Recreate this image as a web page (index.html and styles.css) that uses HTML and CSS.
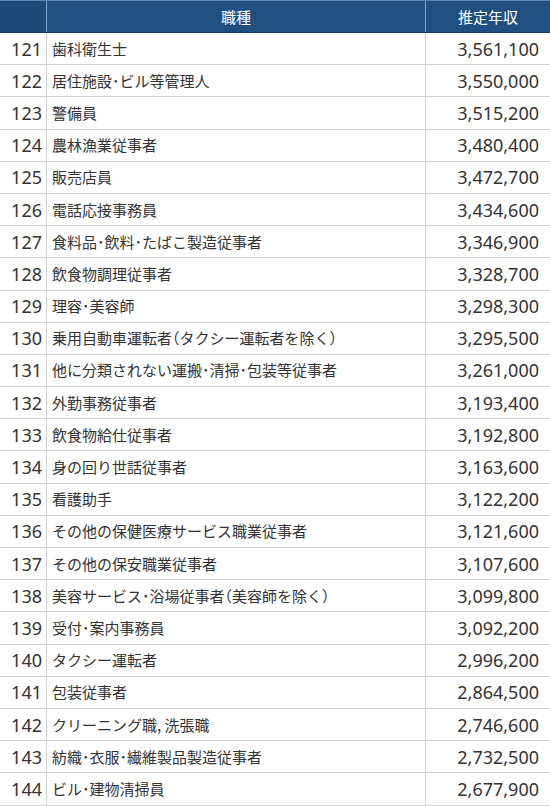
FILE: index.html
```html
<!DOCTYPE html>
<html lang="ja">
<head>
<meta charset="utf-8">
<link rel="stylesheet" href="styles.css">
</head>
<body>
<table class="rank">
<thead>
<tr><th class="c-no"></th><th class="c-job">職種</th><th class="c-pay">推定年収</th></tr>
</thead>
<tbody>
<tr><td class="c-no">121</td><td class="c-job">歯科衛生士</td><td class="c-pay">3,561,100</td></tr>
<tr><td class="c-no">122</td><td class="c-job">居住施設･ビル等管理人</td><td class="c-pay">3,550,000</td></tr>
<tr><td class="c-no">123</td><td class="c-job">警備員</td><td class="c-pay">3,515,200</td></tr>
<tr><td class="c-no">124</td><td class="c-job">農林漁業従事者</td><td class="c-pay">3,480,400</td></tr>
<tr><td class="c-no">125</td><td class="c-job">販売店員</td><td class="c-pay">3,472,700</td></tr>
<tr><td class="c-no">126</td><td class="c-job">電話応接事務員</td><td class="c-pay">3,434,600</td></tr>
<tr><td class="c-no">127</td><td class="c-job">食料品･飲料･たばこ製造従事者</td><td class="c-pay">3,346,900</td></tr>
<tr><td class="c-no">128</td><td class="c-job">飲食物調理従事者</td><td class="c-pay">3,328,700</td></tr>
<tr><td class="c-no">129</td><td class="c-job">理容･美容師</td><td class="c-pay">3,298,300</td></tr>
<tr><td class="c-no">130</td><td class="c-job">乗用自動車運転者<span class="paren">（</span>タクシー運転者を除く<span class="paren">）</span></td><td class="c-pay">3,295,500</td></tr>
<tr><td class="c-no">131</td><td class="c-job">他に分類されない運搬･清掃･包装等従事者</td><td class="c-pay">3,261,000</td></tr>
<tr><td class="c-no">132</td><td class="c-job">外勤事務従事者</td><td class="c-pay">3,193,400</td></tr>
<tr><td class="c-no">133</td><td class="c-job">飲食物給仕従事者</td><td class="c-pay">3,192,800</td></tr>
<tr><td class="c-no">134</td><td class="c-job">身の回り世話従事者</td><td class="c-pay">3,163,600</td></tr>
<tr><td class="c-no">135</td><td class="c-job">看護助手</td><td class="c-pay">3,122,200</td></tr>
<tr><td class="c-no">136</td><td class="c-job">その他の保健医療サービス職業従事者</td><td class="c-pay">3,121,600</td></tr>
<tr><td class="c-no">137</td><td class="c-job">その他の保安職業従事者</td><td class="c-pay">3,107,600</td></tr>
<tr><td class="c-no">138</td><td class="c-job">美容サービス･浴場従事者<span class="paren">（</span>美容師を除く<span class="paren">）</span></td><td class="c-pay">3,099,800</td></tr>
<tr><td class="c-no">139</td><td class="c-job">受付･案内事務員</td><td class="c-pay">3,092,200</td></tr>
<tr><td class="c-no">140</td><td class="c-job">タクシー運転者</td><td class="c-pay">2,996,200</td></tr>
<tr><td class="c-no">141</td><td class="c-job">包装従事者</td><td class="c-pay">2,864,500</td></tr>
<tr><td class="c-no">142</td><td class="c-job">クリーニング職, 洗張職</td><td class="c-pay">2,746,600</td></tr>
<tr><td class="c-no">143</td><td class="c-job">紡織･衣服･繊維製品製造従事者</td><td class="c-pay">2,732,500</td></tr>
<tr><td class="c-no">144</td><td class="c-job">ビル･建物清掃員</td><td class="c-pay">2,677,900</td></tr>
</tbody>
</table>
</body>
</html>
```
FILE: styles.css
```css
html, body {
  margin: 0;
  padding: 0;
  background: #ffffff;
}
.rank {
  width: 550px;
  border-collapse: collapse;
  table-layout: fixed;
  font-family: "Noto Sans CJK JP", "Noto Sans", sans-serif;
  color: #333333;
}
.rank th {
  background: #20507f;
  color: #ffffff;
  font-weight: normal;
  font-size: 15px;
  height: 31px;
  padding: 0;
  border-left: 1px solid #7fa6cf;
  border-top: 1px solid #5b86b3;
  border-bottom: 1px solid #1a3f63;
  text-align: center;
}
.rank th:first-child {
  border-left: none;
  background: #1d4b77;
}
.rank td {
  height: 31.2px;
  padding: 0;
  border: 1px solid #d0d0d0;
  font-size: 15px;
  line-height: 20px;
}
.rank td:first-child {
  border-left: none;
}
.rank td:last-child {
  border-right: none;
}
.c-no {
  width: 46px;
}
.c-pay {
  width: 124px;
}
td.c-no {
  text-align: right;
  padding-right: 4px;
  font-family: "Noto Sans", "Open Sans", sans-serif;
  font-size: 18px;
}
td.c-job {
  padding-left: 5px;
  white-space: nowrap;
}
.paren {
  font-feature-settings: "halt";
}
td.c-pay {
  text-align: right;
  padding-right: 11px;
  font-family: "Noto Sans", "Open Sans", sans-serif;
  font-size: 18px;
}
```
